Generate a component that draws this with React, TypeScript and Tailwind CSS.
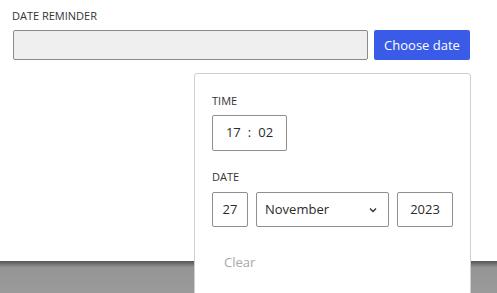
import React from 'react';

function Field(props: { className?: string; children: React.ReactNode }) {
	return (
		<div className={`flex items-center border border-[#8f8f8f] rounded-[2px] bg-white text-[13px] text-[#2a2a2a] ${props.className ?? ''}`}>
			{props.children}
		</div>
	);
}

export default function App() {
	return (
		<div className="relative w-[497px] h-[293px] overflow-hidden bg-white font-['Open_Sans',sans-serif]">
			<div className="flex flex-col h-full">
				<div className="px-[12px] pt-[8px] flex-1">
					<div className="text-[11px] leading-[16px] text-[#333] uppercase">Date reminder</div>
					<div className="flex items-center gap-[6px] mt-[6px] pl-[1px]">
						<div className="w-[355px] h-[30px] rounded-[2px] border border-[#8a8a8a] bg-[#efefef]" />
						<button className="w-[96px] h-[30px] rounded-[2px] bg-[#3a5ae8] text-white text-[13px] leading-none">
							Choose date
						</button>
					</div>
				</div>
				<div className="h-[32px] bg-gradient-to-b from-[#555] via-[#959595] via-20% to-[#9a9a9a]" />
			</div>

			<div className="absolute left-[194px] top-[73px] w-[277px] h-[240px] bg-white border border-[#cfcfcf] rounded-[3px] pl-[17px] pt-[19px]">
				<div className="text-[11px] leading-[16px] text-[#333] uppercase">Time</div>
				<Field className="mt-[6px] w-[75px] h-[36px] justify-center gap-[7px]">
					<span>17</span>
					<span>:</span>
					<span>02</span>
				</Field>
				<div className="mt-[18px] text-[11px] leading-[16px] text-[#333] uppercase">Date</div>
				<div className="flex gap-[8px] mt-[7px]">
					<Field className="w-[36px] h-[35px] justify-center">27</Field>
					<Field className="w-[133px] h-[35px] justify-between pl-[8px] pr-[10px]">
						<span>November</span>
						<svg width="10" height="10" viewBox="0 0 10 10" fill="none">
							<path d="M2 3.5 L5 6.5 L8 3.5" stroke="#333" strokeWidth="1.4" />
						</svg>
					</Field>
					<Field className="w-[56px] h-[35px] justify-center">2023</Field>
				</div>
				<div className="mt-[26px] pl-[12px] text-[13px] text-[#a8a8a8]">Clear</div>
			</div>
		</div>
	);
}
